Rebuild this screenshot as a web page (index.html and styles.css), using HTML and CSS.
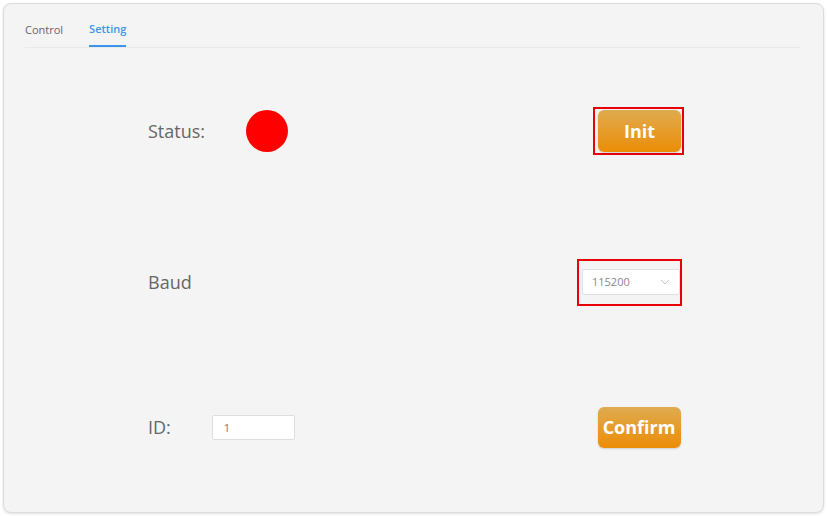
FILE: index.html
```html
<!DOCTYPE html>
<html>
<head>
<meta charset="utf-8">
<link rel="stylesheet" href="styles.css">
</head>
<body>
<div class="card">
  <div class="tabs">
    <div class="tab">Control</div>
    <div class="tab active">Setting</div>
  </div>
  <div class="content">
    <div class="row row1">
      <div class="left">
        <span class="label">Status:</span>
        <span class="dot"></span>
      </div>
      <div class="right">
        <div class="hl hl-init">
          <button class="btn btn-init">Init</button>
        </div>
      </div>
    </div>
    <div class="row row2">
      <div class="left">
        <span class="label">Baud</span>
      </div>
      <div class="right">
        <div class="hl hl-select">
          <div class="select">
            <span class="select-val">115200</span>
            <svg class="chev" width="10" height="6" viewBox="0 0 10 6"><path d="M1 1 L5 5 L9 1" fill="none" stroke="#c0c4cc" stroke-width="1"/></svg>
          </div>
        </div>
      </div>
    </div>
    <div class="row row3">
      <div class="left">
        <span class="label">ID:</span>
        <div class="input">1</div>
      </div>
      <div class="right">
        <button class="btn btn-confirm">Confirm</button>
      </div>
    </div>
  </div>
</div>
</body>
</html>
```
FILE: styles.css
```css
* { box-sizing: border-box; }
html, body { margin: 0; padding: 0; background: #ffffff; }
body { font-family: "Open Sans", "Noto Sans", sans-serif; }

.card {
  margin: 3px;
  width: 821px;
  height: 510px;
  border: 1px solid #dcdcdc;
  border-radius: 8px;
  background: #f4f4f4;
  box-shadow: 0 1px 3px rgba(0,0,0,0.12);
}

.tabs {
  margin: 0 22px 0 21px;
  height: 44px;
  border-bottom: 1px solid #e9e9e9;
  display: flex;
  align-items: flex-end;
  gap: 26px;
}
.tab {
  font-size: 11px;
  color: #666;
  height: 44px;
  line-height: 53px;
}
.tab.active {
  color: #3d94ef;
  font-weight: 600;
  border-bottom: 2px solid #3d94ef;
  line-height: 51px;
}

.content {
  padding: 0 103px 0 144px;
}
.row {
  display: grid;
  grid-template-columns: 1fr 160px;
  align-items: center;
  height: 50px;
}
.row1 { margin-top: 58px; }
.row2 { margin-top: 101px; }
.row3 { margin-top: 95px; }

.left {
  display: flex;
  align-items: center;
  gap: 41px;
}
.label {
  font-size: 18px;
  color: #666;
}
.dot {
  width: 42px;
  height: 42px;
  border-radius: 50%;
  background: #ff0000;
}
.input {
  width: 83px;
  height: 25px;
  background: #fff;
  border: 1px solid #dedede;
  border-radius: 2px;
  font-size: 11px;
  color: #777;
  padding-left: 11px;
  line-height: 23px;
}

.right {
  display: flex;
  justify-content: center;
}
.hl {
  border: 2px solid #e8000b;
}
.hl-init {
  padding: 1px 1px 1px 3px;
  width: 91px;
  height: 48px;
  margin-left: -3px;
}
.hl-select {
  width: 105px;
  height: 47px;
  padding: 8px 0 0 3px;
  margin-left: -21px;
}

.btn {
  display: block;
  border: none;
  border-radius: 6px;
  background: linear-gradient(#dfab4f, #ec8d07);
  color: #fff;
  font-family: "Open Sans", "Noto Sans", sans-serif;
  font-weight: 700;
  font-size: 18px;
  width: 83px;
  padding: 0;
  box-shadow: 0 1px 2px rgba(0,0,0,0.15);
}
.btn-init { height: 42px; }
.btn-confirm { height: 41px; margin-left: -2px; }

.select {
  width: 98px;
  height: 26px;
  background: #fff;
  border: 1px solid #e0e0e0;
  border-radius: 2px;
  display: flex;
  align-items: center;
  justify-content: space-between;
  padding: 0 9px 0 9px;
}
.select-val {
  font-size: 11px;
  color: #888;
}
.chev { display: block; }
```
